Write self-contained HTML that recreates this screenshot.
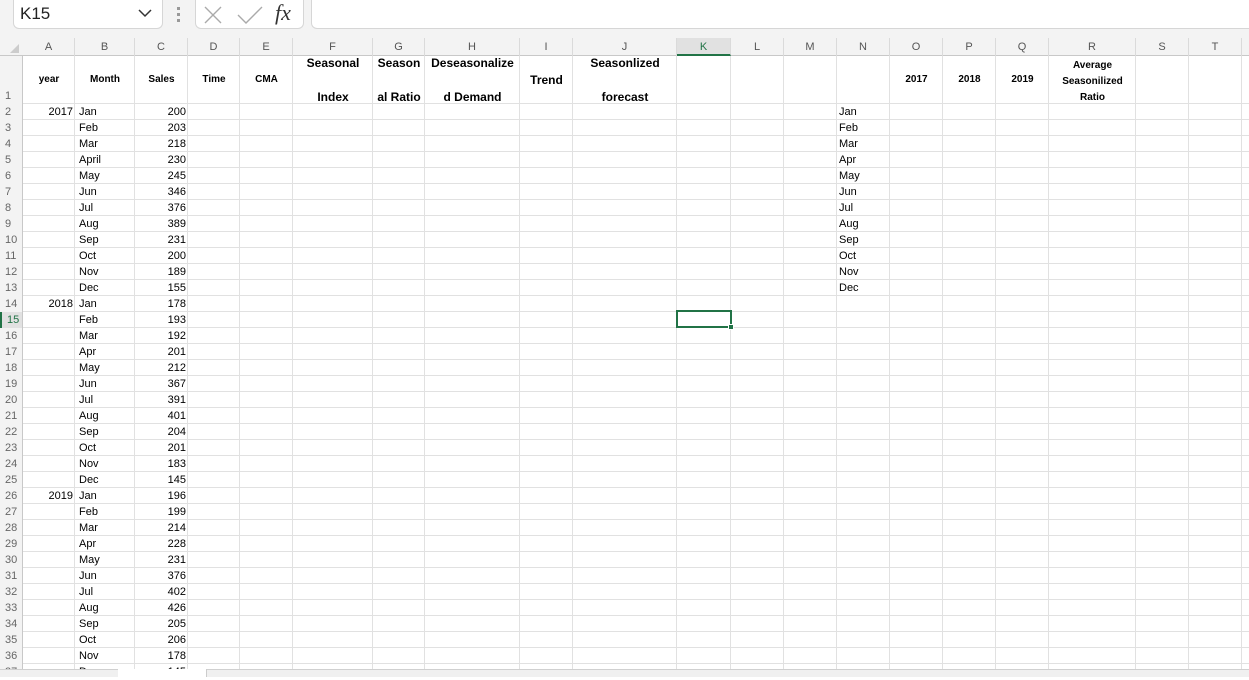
<!DOCTYPE html>
<html><head><meta charset="utf-8">
<style>
*{margin:0;padding:0;box-sizing:border-box}
body{width:1249px;height:677px;overflow:hidden;background:#fff;font-family:"Liberation Sans",Arial,sans-serif;position:relative}
.a{position:absolute}
.top{left:0;top:0;width:1249px;height:38px;background:#f3f3f3}
.box{background:#fff;border:1px solid #d6d6d6;border-radius:5px}
.colh{left:0;top:38px;width:1249px;height:18px;background:#f3f3f3;border-bottom:1px solid #c8c8c8}
.cl{position:absolute;top:38px;height:18px;font-size:11px;color:#555;text-align:center;line-height:18px;border-right:1px solid #dadada}
.vl{position:absolute;top:56px;width:1px;height:613px;background:#e1e1e1}
.rows{left:0;top:56px;width:1249px;height:613px;background:repeating-linear-gradient(to bottom,transparent 0,transparent 15px,#e1e1e1 15px,#e1e1e1 16px);background-position:0 48px}
.r1{left:0;top:56px;width:1249px;height:48px;background:#fff;border-bottom:1px solid #e1e1e1}
.col{position:absolute;top:104px;font-size:11px;line-height:16px;color:#000;white-space:pre}
.rn{position:absolute;left:0;top:56px;width:23px;font-size:11px;color:#666;line-height:16px;padding-left:5px;background:#f3f3f3;border-right:1px solid #c8c8c8;height:613px}
.h{position:absolute;font-weight:bold;text-align:center;color:#000}
.hs{font-size:10px;top:74px}
.hb{font-size:12px}
</style></head><body>
<div class="a top"></div>
<div class="a box" style="left:13px;top:0;width:150px;height:29px;border-top:none;border-radius:0 0 6px 6px"></div>
<div class="a" style="left:20px;top:4px;font-size:17px;color:#222">K15</div>
<svg class="a" style="left:138px;top:8px" width="14" height="10"><path d="M1 2 L7 8 L13 2" fill="none" stroke="#333" stroke-width="1.5"/></svg>
<div class="a" style="left:177px;top:7px;width:3px;height:3px;background:#999"></div>
<div class="a" style="left:177px;top:13px;width:3px;height:3px;background:#999"></div>
<div class="a" style="left:177px;top:19px;width:3px;height:3px;background:#999"></div>
<div class="a box" style="left:195px;top:0;width:109px;height:29px;border-top:none;border-radius:0 0 6px 6px"></div>
<svg class="a" style="left:203px;top:5px" width="20" height="20"><path d="M2 2L18 18M18 2L2 18" stroke="#aaa" stroke-width="1.4"/></svg>
<svg class="a" style="left:237px;top:5px" width="26" height="20"><path d="M1 10L9 18L25 2" fill="none" stroke="#aaa" stroke-width="1.4"/></svg>
<div class="a" style="left:275px;top:0px;font-size:22px;font-style:italic;font-family:'Liberation Serif',serif;color:#333">fx</div>
<div class="a box" style="left:311px;top:0;width:950px;height:29px;border-top:none;border-radius:0 0 6px 6px"></div>

<div class="a colh"></div>
<svg class="a" style="left:10px;top:44px" width="9" height="9"><path d="M9 0L9 9L0 9Z" fill="#ccc"/></svg>
<div class="cl" style="left:23px;width:52px">A</div>
<div class="cl" style="left:75px;width:60px">B</div>
<div class="cl" style="left:135px;width:53px">C</div>
<div class="cl" style="left:188px;width:52px">D</div>
<div class="cl" style="left:240px;width:53px">E</div>
<div class="cl" style="left:293px;width:80px">F</div>
<div class="cl" style="left:373px;width:52px">G</div>
<div class="cl" style="left:425px;width:95px">H</div>
<div class="cl" style="left:520px;width:53px">I</div>
<div class="cl" style="left:573px;width:104px">J</div>
<div class="cl" style="left:677px;width:54px;background:#e1e1e1;color:#217346;border-bottom:2px solid #217346">K</div>
<div class="cl" style="left:731px;width:53px">L</div>
<div class="cl" style="left:784px;width:53px">M</div>
<div class="cl" style="left:837px;width:53px">N</div>
<div class="cl" style="left:890px;width:53px">O</div>
<div class="cl" style="left:943px;width:53px">P</div>
<div class="cl" style="left:996px;width:53px">Q</div>
<div class="cl" style="left:1049px;width:87px">R</div>
<div class="cl" style="left:1136px;width:53px">S</div>
<div class="cl" style="left:1189px;width:53px">T</div>

<div class="a rows"></div>
<div class="a r1"></div>
<div class="vl" style="left:74px"></div><div class="vl" style="left:134px"></div><div class="vl" style="left:187px"></div><div class="vl" style="left:239px"></div><div class="vl" style="left:292px"></div><div class="vl" style="left:372px"></div><div class="vl" style="left:424px"></div><div class="vl" style="left:519px"></div><div class="vl" style="left:572px"></div><div class="vl" style="left:676px"></div><div class="vl" style="left:730px"></div><div class="vl" style="left:783px"></div><div class="vl" style="left:836px"></div><div class="vl" style="left:889px"></div><div class="vl" style="left:942px"></div><div class="vl" style="left:995px"></div><div class="vl" style="left:1048px"></div><div class="vl" style="left:1135px"></div><div class="vl" style="left:1188px"></div><div class="vl" style="left:1241px"></div>

<div class="rn"><div style="height:48px;line-height:80px">1</div>2<br>3<br>4<br>5<br>6<br>7<br>8<br>9<br>10<br>11<br>12<br>13<br>14<br><div style="margin-left:-5px;padding-left:5px;background:#e1e1e1;color:#217346;border-left:2px solid #217346">15</div>16<br>17<br>18<br>19<br>20<br>21<br>22<br>23<br>24<br>25<br>26<br>27<br>28<br>29<br>30<br>31<br>32<br>33<br>34<br>35<br>36<br>37</div>

<div class="h hs" style="left:23px;width:52px">year</div>
<div class="h hs" style="left:75px;width:60px">Month</div>
<div class="h hs" style="left:135px;width:53px">Sales</div>
<div class="h hs" style="left:188px;width:52px">Time</div>
<div class="h hs" style="left:240px;width:53px">CMA</div>
<div class="h hb" style="left:293px;width:80px;top:56px">Seasonal</div>
<div class="h hb" style="left:293px;width:80px;top:90px">Index</div>
<div class="h hb" style="left:373px;width:52px;top:56px;overflow:hidden;white-space:nowrap">Season</div>
<div class="h hb" style="left:373px;width:52px;top:90px;white-space:nowrap">al Ratio</div>
<div class="h hb" style="left:425px;width:95px;top:56px;white-space:nowrap">Deseasonalize</div>
<div class="h hb" style="left:425px;width:95px;top:90px">d Demand</div>
<div class="h hb" style="left:520px;width:53px;top:73px">Trend</div>
<div class="h hb" style="left:573px;width:104px;top:56px">Seasonlized</div>
<div class="h hb" style="left:573px;width:104px;top:90px">forecast</div>
<div class="h hs" style="left:890px;width:53px">2017</div>
<div class="h hs" style="left:943px;width:53px">2018</div>
<div class="h hs" style="left:996px;width:53px">2019</div>
<div class="h" style="left:1049px;width:87px;top:58px;font-size:10px;line-height:16px">Average<br>Seasonilized<br>Ratio</div>

<div class="col" style="left:23px;width:50px;text-align:right">2017<br><br><br><br><br><br><br><br><br><br><br><br>2018<br><br><br><br><br><br><br><br><br><br><br><br>2019</div>
<div class="col" style="left:79px">Jan
Feb
Mar
April
May
Jun
Jul
Aug
Sep
Oct
Nov
Dec
Jan
Feb
Mar
Apr
May
Jun
Jul
Aug
Sep
Oct
Nov
Dec
Jan
Feb
Mar
Apr
May
Jun
Jul
Aug
Sep
Oct
Nov
Dec</div>
<div class="col" style="left:135px;width:51px;text-align:right">200
203
218
230
245
346
376
389
231
200
189
155
178
193
192
201
212
367
391
401
204
201
183
145
196
199
214
228
231
376
402
426
205
206
178
145</div>
<div class="col" style="left:839px">Jan
Feb
Mar
Apr
May
Jun
Jul
Aug
Sep
Oct
Nov
Dec</div>

<div class="a" style="left:676px;top:310px;width:56px;height:18px;border:2px solid #217346"></div>
<div class="a" style="left:728px;top:324px;width:6px;height:6px;background:#217346;border:1px solid #fff"></div>

<div class="a" style="left:0;top:669px;width:1249px;height:8px;background:#f0f0f0;border-top:1px solid #d0d0d0"></div>
<div class="a" style="left:118px;top:669px;width:88px;height:8px;background:#fff"></div>
<div class="a" style="left:206px;top:669px;width:1;height:8px;border-left:1px solid #ccc"></div>
</body></html>
